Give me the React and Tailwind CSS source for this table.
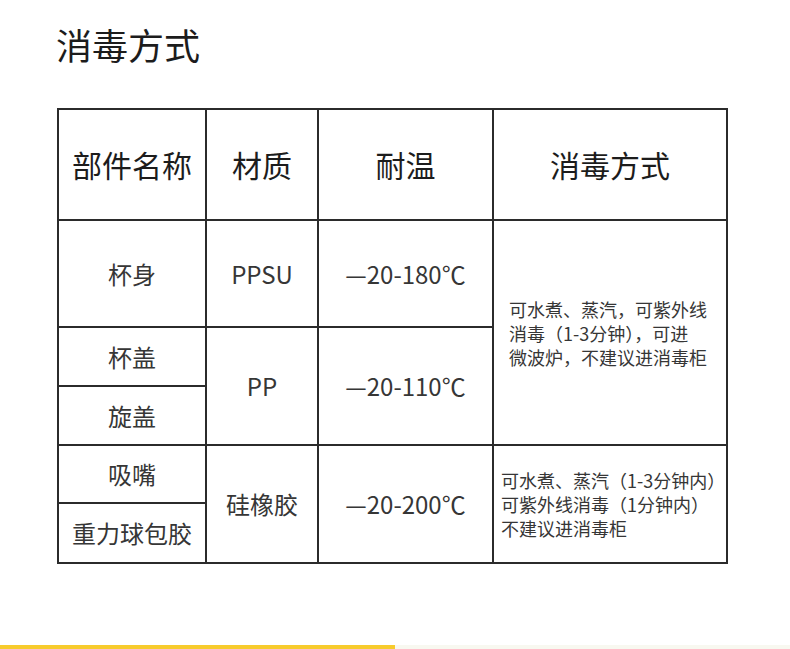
const cjk = { fontFamily: '"Noto Sans CJK SC", "Noto Sans", sans-serif' }

const cell = 'border-2 border-[#2b2b2b] text-center align-middle'

export default function App() {
  return (
    <div className="flex h-[649px] w-[790px] flex-col overflow-hidden bg-white" style={cjk}>
      <h1 className="pl-[56px] pt-[22px] text-[36px] font-normal leading-[44px] text-[#1c1c1c]">消毒方式</h1>

      <div className="pl-[57px] pt-[42px]">
        <table className="w-[669px] table-fixed border-collapse text-[#363636]">
          <colgroup>
            <col className="w-[148px]" />
            <col className="w-[112px]" />
            <col className="w-[175px]" />
            <col className="w-[234px]" />
          </colgroup>
          <thead>
            <tr className="h-[111px] text-[30px] text-[#1c1c1c]">
              <th className={`${cell} font-normal`}>部件名称</th>
              <th className={`${cell} font-normal`}>材质</th>
              <th className={`${cell} font-normal`}>耐温</th>
              <th className={`${cell} font-normal`}>消毒方式</th>
            </tr>
          </thead>
          <tbody className="text-[24px]">
            <tr className="h-[107px]">
              <td className={cell}>杯身</td>
              <td className={cell}>PPSU</td>
              <td className={cell}>—20-180℃</td>
              <td rowSpan={3} className={`${cell} !text-left pl-[15px] text-[18px] leading-[24px] whitespace-nowrap`}>
                可水煮、蒸汽，可紫外线
                <br />
                消毒（1-3分钟），可进
                <br />
                微波炉，不建议进消毒柜
              </td>
            </tr>
            <tr className="h-[59px]">
              <td className={cell}>杯盖</td>
              <td rowSpan={2} className={cell}>PP</td>
              <td rowSpan={2} className={cell}>—20-110℃</td>
            </tr>
            <tr className="h-[59px]">
              <td className={cell}>旋盖</td>
            </tr>
            <tr className="h-[58px]">
              <td className={cell}>吸嘴</td>
              <td rowSpan={2} className={cell}>硅橡胶</td>
              <td rowSpan={2} className={cell}>—20-200℃</td>
              <td rowSpan={2} className={`${cell} !text-left pl-[7px] text-[18px] leading-[24px] whitespace-nowrap`}>
                可水煮、蒸汽（1-3分钟内）
                <br />
                可紫外线消毒（1分钟内）
                <br />
                不建议进消毒柜
              </td>
            </tr>
            <tr className="h-[60px]">
              <td className={cell}>重力球包胶</td>
            </tr>
          </tbody>
        </table>
      </div>

      <div className="mt-auto flex h-[4px]">
        <div className="w-[395px] bg-[#f7cb2c]" />
        <div className="flex-1 bg-[#f8f8f0]" />
      </div>
    </div>
  )
}
